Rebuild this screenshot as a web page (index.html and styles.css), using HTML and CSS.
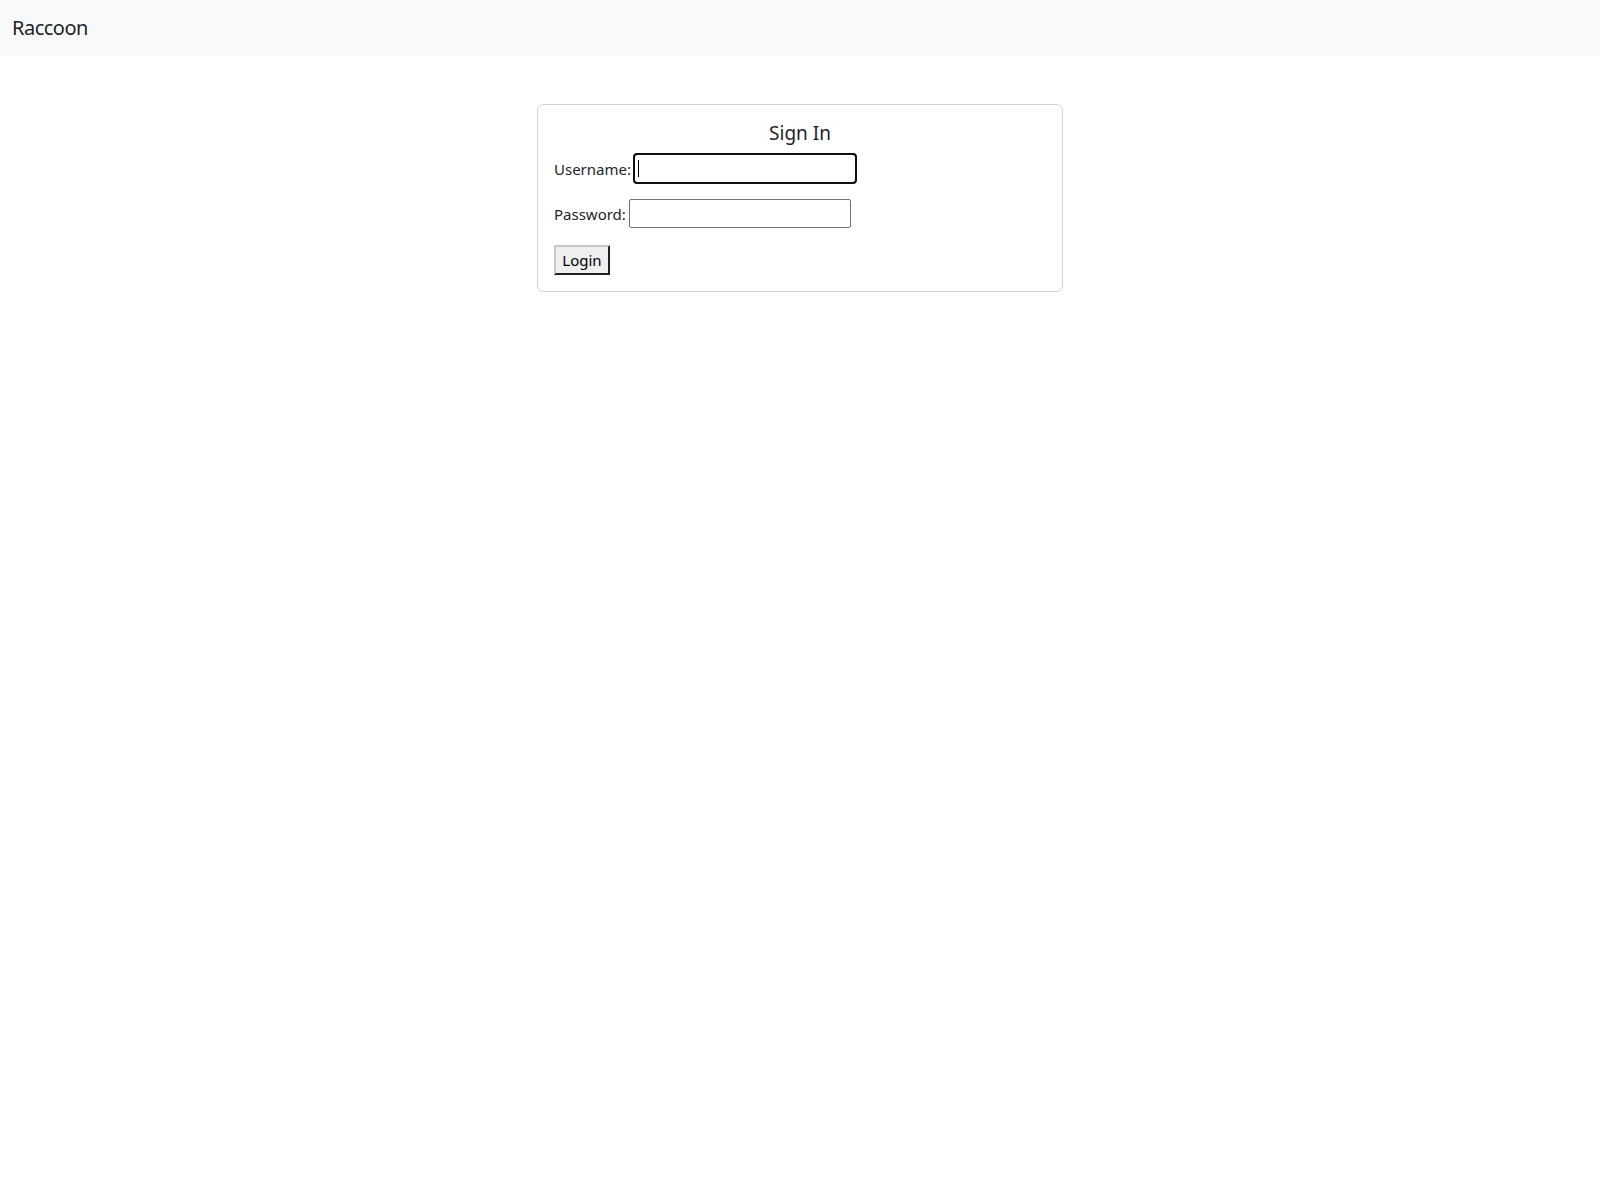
FILE: index.html
```html
<!DOCTYPE html>
<html lang="en">
<head>
<meta charset="utf-8">
<title>Raccoon</title>
<link rel="stylesheet" href="styles.css">
</head>
<body>
<nav class="navbar">
  <span class="brand">Raccoon</span>
</nav>
<main class="page">
  <section class="card">
    <h5 class="card-title">Sign In</h5>
    <form class="form">
      <div class="row">
        <label class="label" for="username">Username:</label>
        <span class="field-wrap">
          <input class="field focused" id="username" type="text">
          <span class="caret"></span>
        </span>
      </div>
      <div class="row">
        <label class="label" for="password">Password:</label>
        <input class="field" id="password" type="password">
      </div>
      <div class="row row-actions">
        <button class="btn" type="button">Login</button>
      </div>
    </form>
  </section>
</main>
</body>
</html>
```
FILE: styles.css
```css
html, body {
  margin: 0;
  padding: 0;
  background: #fff;
}
body {
  font-family: "Noto Sans", "DejaVu Sans", sans-serif;
  color: #212529;
  font-size: 16px;
}
.navbar {
  height: 56px;
  background: #f8f9fa;
  display: flex;
  align-items: center;
  padding: 0 12px;
  box-sizing: border-box;
}
.brand {
  font-size: 20px;
  line-height: 30px;
  color: rgba(0, 0, 0, 0.9);
  letter-spacing: -0.5px;
}
.page {
  display: flex;
  justify-content: center;
  padding-top: 48px;
}
.card {
  width: 526px;
  box-sizing: border-box;
  border: 1px solid #d3d3d3;
  border-radius: 6px;
  padding: 16px;
}
.card-title {
  margin: 0 0 9px;
  text-align: center;
  font-size: 19px;
  font-weight: 400;
  line-height: 24px;
}
.form {
  display: flex;
  flex-direction: column;
  gap: 16px;
}
.row {
  display: flex;
  align-items: center;
}
.row-actions {
  margin-top: 1px;
}
.label {
  font-size: 15px;
  margin-right: 3px;
}
.field-wrap {
  position: relative;
  display: flex;
}
.field {
  width: 222px;
  height: 29px;
  box-sizing: border-box;
  border: 1px solid #767676;
  border-radius: 2px;
  padding: 1px 2px;
  font-size: 13px;
  background: #fff;
  margin: 0;
}
.field.focused {
  outline: 2px solid #101010;
  outline-offset: -1px;
  border-radius: 3px;
}
.caret {
  position: absolute;
  left: 4px;
  top: 6px;
  width: 1px;
  height: 17px;
  background: #000;
}
.btn {
  font-family: "Noto Sans", "DejaVu Sans", sans-serif;
  font-size: 15px;
  color: #000;
  background: #efefef;
  border: 2px outset #767676;
  border-top-color: #c8c8c8;
  border-left-color: #c8c8c8;
  height: 30px;
  width: 56px;
  padding: 0;
  margin: 0;
}
```
